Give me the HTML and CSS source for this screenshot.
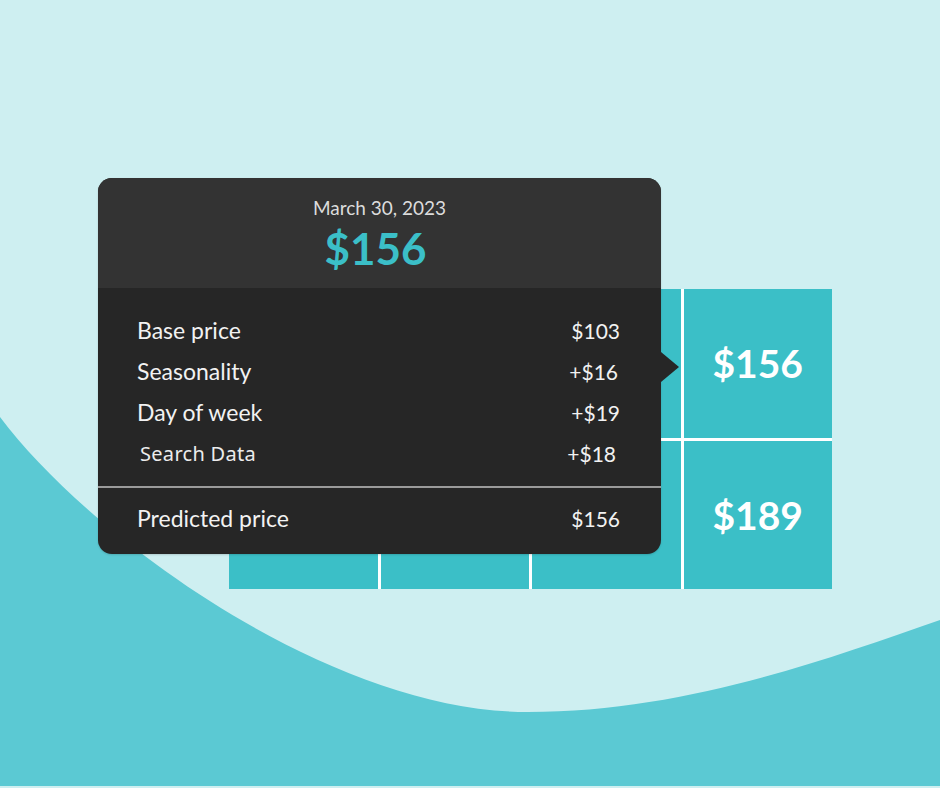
FILE: index.html
```html
<!DOCTYPE html>
<html lang="en">
<head>
<meta charset="utf-8">
<title>Price prediction</title>
<link rel="stylesheet" href="styles.css">
</head>
<body>
<div class="page">
  <svg class="wave" width="940" height="788" viewBox="0 0 940 788" aria-hidden="true">
    <path d="M0,417 C90,537 330,712 528,712 C680,712 820,662 940,620 L940,786 L0,786 Z" fill="#5bc9d3"/>
  </svg>
  <div class="stage">
    <div class="grid">
      <div class="cell"></div>
      <div class="cell"></div>
      <div class="cell"></div>
      <div class="cell">$156</div>
      <div class="cell"></div>
      <div class="cell"></div>
      <div class="cell"></div>
      <div class="cell">$189</div>
    </div>
    <div class="tooltip">
      <div class="tip-head">
        <div class="tip-date">March 30, 2023</div>
        <div class="tip-price">$156</div>
      </div>
      <div class="tip-body">
        <div class="rows">
          <div class="row"><span class="label">Base price</span><span class="val">$103</span></div>
          <div class="row"><span class="label">Seasonality</span><span class="val val-s">+$16</span></div>
          <div class="row"><span class="label">Day of week</span><span class="val">+$19</span></div>
          <div class="row row-alt"><span class="label label-alt">Search Data</span><span class="val">+$18</span></div>
        </div>
        <div class="sep"></div>
        <div class="total">
          <div class="row"><span class="label">Predicted price</span><span class="val">$156</span></div>
        </div>
      </div>
      <div class="arrow"></div>
    </div>
  </div>
</div>
</body>
</html>
```

FILE: styles.css
```css
* { box-sizing: border-box; }
html, body { margin: 0; padding: 0; }
body {
  background: #ceeff1;
  font-family: "Lato", "Noto Sans", sans-serif;
}
.page {
  position: relative;
  width: 940px;
  height: 788px;
  overflow: hidden;
  background: #ceeff1;
}
.wave {
  position: absolute;
  left: 0;
  top: 0;
  display: block;
}
.stage {
  position: relative;
  padding: 289px 0 0 229px;
}
.grid {
  display: grid;
  grid-template-columns: repeat(4, 148.5px);
  grid-template-rows: repeat(2, 148.5px);
  gap: 3px;
  width: 603px;
  background: #ffffff;
}
.cell {
  background: #3bbfc7;
  color: #ffffff;
  font-size: 39px;
  font-weight: 700;
  display: flex;
  align-items: center;
  justify-content: center;
}
.tooltip {
  position: absolute;
  left: 98px;
  top: 178px;
  width: 563px;
  height: 376px;
  border-radius: 14px;
  background: #262626;
  display: flex;
  flex-direction: column;
  box-shadow: 0 1px 2px rgba(0,0,0,0.15);
}
.tip-head {
  height: 110px;
  background: #333333;
  border-radius: 14px 14px 0 0;
  display: flex;
  flex-direction: column;
  align-items: center;
  padding-top: 19px;
}
.tip-date {
  color: #dcdcdc;
  font-size: 19px;
  line-height: 22px;
}
.tip-price {
  color: #3bbfc8;
  font-size: 44px;
  font-weight: 700;
  line-height: 50px;
  margin-top: 4px;
  margin-right: 8px;
}
.tip-body {
  flex: 1;
  display: flex;
  flex-direction: column;
}
.rows {
  padding: 21.5px 41px 0 39px;
}
.row {
  display: flex;
  justify-content: space-between;
  align-items: center;
  height: 41px;
  color: #f2f2f2;
}
.label {
  font-size: 23px;
}
.val {
  font-size: 21px;
}
.val-s { margin-right: 2px; }
.row-alt {
  padding: 0 4px 0 3px;
}
.label-alt {
  font-family: "Noto Sans", "Open Sans", sans-serif;
  font-weight: 400;
  font-size: 20px;
  letter-spacing: 0.3px;
  color: #ececec;
}
.sep {
  margin-top: 12.5px;
  height: 2px;
  background: #9a9a9a;
}
.total {
  padding: 9.5px 41px 0 39px;
}
.arrow {
  position: absolute;
  right: -18px;
  top: 174px;
  width: 0;
  height: 0;
  border-top: 15px solid transparent;
  border-bottom: 15px solid transparent;
  border-left: 18px solid #262626;
}
```
